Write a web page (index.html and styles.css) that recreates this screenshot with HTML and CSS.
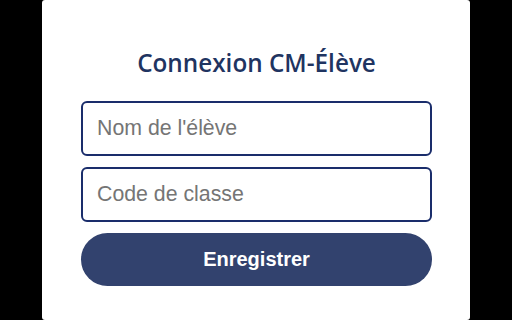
FILE: index.html
```html
<!DOCTYPE html>
<html lang="fr">
<head>
<meta charset="utf-8">
<title>Connexion CM-Élève</title>
<link rel="stylesheet" href="styles.css">
</head>
<body>
<main class="card">
  <h1 class="title">Connexion CM-Élève</h1>
  <form class="form">
    <input class="field" type="text" placeholder="Nom de l'élève">
    <input class="field" type="text" placeholder="Code de classe">
    <button class="btn" type="button">Enregistrer</button>
  </form>
</main>
</body>
</html>
```
FILE: styles.css
```css
html, body {
  margin: 0;
  padding: 0;
  background: #000;
  height: 100%;
}
.card {
  box-sizing: border-box;
  width: 428px;
  height: 320px;
  margin: 0 auto;
  background: #fff;
  border-radius: 3px;
  padding: 47px 38px 0 39px;
}
.title {
  margin: 0 0 22px;
  font-family: "Open Sans", sans-serif;
  font-weight: 600;
  font-size: 24.3px;
  line-height: 32px;
  color: #1f3461;
  text-align: center;
}
.form {
  display: flex;
  flex-direction: column;
  gap: 11px;
}
.field {
  box-sizing: border-box;
  height: 55px;
  width: 100%;
  border: 2px solid #1a2d6b;
  border-radius: 6px;
  padding: 0 14px;
  font-family: "Liberation Sans", Arial, sans-serif;
  font-size: 21.3px;
  color: #222;
  background: #fff;
  outline: none;
}
.field::placeholder {
  color: #757575;
}
.btn {
  height: 53px;
  width: 100%;
  border: none;
  border-radius: 27px;
  background: #32426e;
  color: #fff;
  font-family: "Liberation Sans", Arial, sans-serif;
  font-weight: 700;
  font-size: 20px;
  cursor: pointer;
}
```
